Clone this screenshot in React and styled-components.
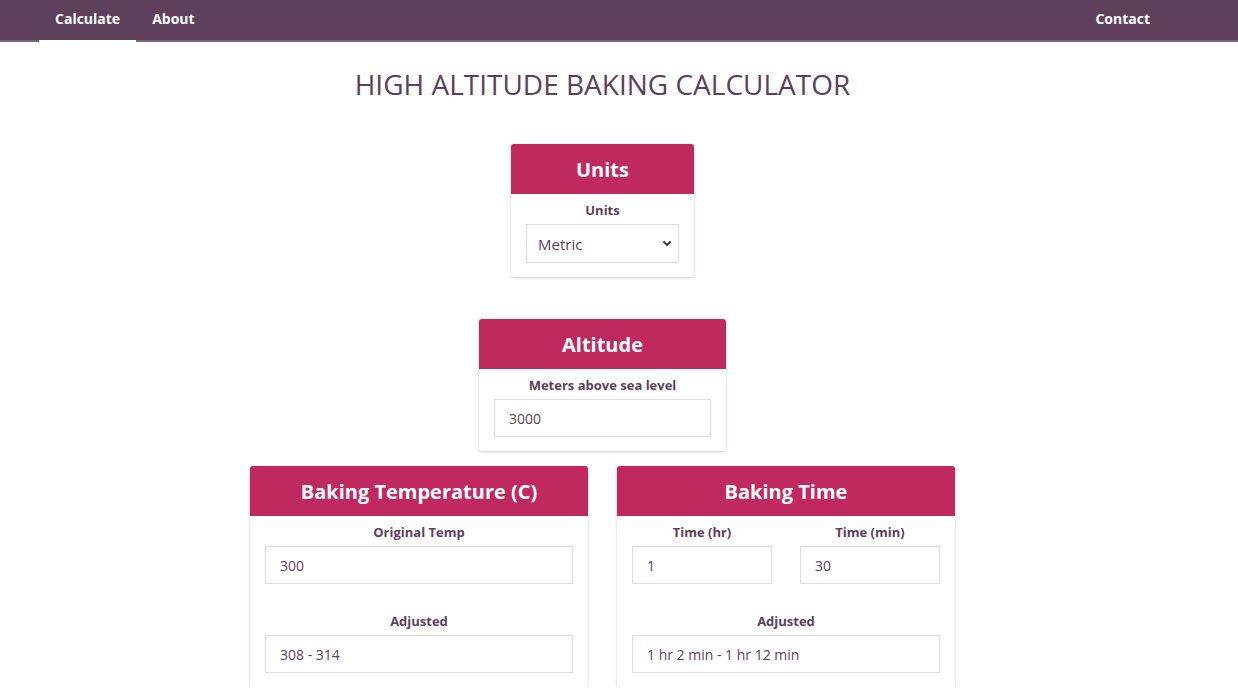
import React, { useState } from "react";
import styled, { createGlobalStyle } from "styled-components";

const GlobalStyle = createGlobalStyle`
  body {
    margin: 0;
    font-family: "Open Sans", "Noto Sans", sans-serif;
    background: #fff;
    color: #5d3f5c;
  }
  * { box-sizing: border-box; }
`;

const Nav = styled.nav`
  height: 42px;
  background-color: #5e405c;
  border-bottom: 2px solid #7b6378;
  display: flex;
  align-items: stretch;
  justify-content: space-between;
  padding: 0 72px 0 39px;
`;

const NavGroup = styled.div`
  display: flex;
  align-items: stretch;
`;

const NavItem = styled.a`
  display: flex;
  align-items: center;
  padding: 0 16px 4px;
  color: #fff;
  font-weight: 700;
  font-size: 14px;
  text-decoration: none;
  cursor: pointer;
  border-bottom: 2px solid ${(p) => (p.$active ? "#fff" : "transparent")};
  margin-bottom: -2px;
`;

const Main = styled.main`
  width: 1205px;
  display: flex;
  flex-direction: column;
  align-items: center;
`;

const Title = styled.h1`
  margin: 23px 0 0;
  font-size: 28px;
  font-weight: 400;
  line-height: 38px;
  color: #5d3f5c;
`;

const Card = styled.section`
  width: ${(p) => p.$width}px;
  margin-top: ${(p) => p.$top || 0}px;
  background: #fff;
  border-radius: 3px;
  box-shadow: 0 1px 3px rgba(0, 0, 0, 0.2);
  overflow: hidden;
`;

const CardHeader = styled.h2`
  margin: 0;
  height: 50px;
  background-color: #c0295f;
  color: #fff;
  font-size: 20px;
  font-weight: 700;
  display: flex;
  align-items: center;
  justify-content: center;
`;

const CardBody = styled.div`
  padding: 8px 15px 14px;
  display: flex;
  flex-direction: column;
`;

const Row = styled.div`
  display: flex;
  gap: 28px;
  justify-content: center;
`;

const CardRow = styled.div`
  display: flex;
  gap: 29px;
  margin-top: 15px;
`;

const Field = styled.label`
  display: flex;
  flex-direction: column;
  align-items: stretch;
  flex: 1;
  margin-top: ${(p) => p.$top || 0}px;
`;

const Label = styled.span`
  text-align: center;
  font-size: 13px;
  font-weight: 700;
  color: #5d3f5c;
  line-height: 16px;
  margin-bottom: 6px;
`;

const Input = styled.input`
  height: 38px;
  border: 1px solid #dcdcdc;
  padding: 0 14px;
  font-family: inherit;
  font-size: 14px;
  color: #5d3f5c;
  background: #fff;
  outline: none;
  width: 100%;
`;

const SelectWrap = styled.div`
  position: relative;
`;

const Select = styled.select`
  appearance: none;
  height: 39px;
  width: 100%;
  border: 1px solid #dcdcdc;
  padding: 0 11px;
  font-family: inherit;
  font-size: 15px;
  color: #5d3f5c;
  background: #fff;
  outline: none;
`;

const Chevron = styled.svg`
  position: absolute;
  right: 7px;
  top: 16px;
  pointer-events: none;
`;

export default function App() {
  const [units, setUnits] = useState("metric");
  return (
    <>
      <GlobalStyle />
      <Nav>
        <NavGroup>
          <NavItem $active>Calculate</NavItem>
          <NavItem>About</NavItem>
        </NavGroup>
        <NavGroup>
          <NavItem>Contact</NavItem>
        </NavGroup>
      </Nav>
      <Main>
        <Title>HIGH ALTITUDE BAKING CALCULATOR</Title>
        <Card $width={183} $top={41}>
          <CardHeader>Units</CardHeader>
          <CardBody>
            <Field>
              <Label>Units</Label>
              <SelectWrap>
                <Select value={units} onChange={(e) => setUnits(e.target.value)}>
                  <option value="metric">Metric</option>
                  <option value="imperial">Imperial</option>
                </Select>
                <Chevron width="10" height="7" viewBox="0 0 10 7">
                  <path d="M1.5 1.5 L5 5 L8.5 1.5" fill="none" stroke="#333" strokeWidth="1.8" />
                </Chevron>
              </SelectWrap>
            </Field>
          </CardBody>
        </Card>
        <Card $width={247} $top={42}>
          <CardHeader>Altitude</CardHeader>
          <CardBody>
            <Field>
              <Label>Meters above sea level</Label>
              <Input defaultValue="3000" />
            </Field>
          </CardBody>
        </Card>
        <CardRow>
          <Card $width={338}>
            <CardHeader>Baking Temperature (C)</CardHeader>
            <CardBody>
              <Field>
                <Label>Original Temp</Label>
                <Input defaultValue="300" />
              </Field>
              <Field $top={29}>
                <Label>Adjusted</Label>
                <Input defaultValue="308 - 314" readOnly />
              </Field>
            </CardBody>
          </Card>
          <Card $width={338}>
            <CardHeader>Baking Time</CardHeader>
            <CardBody>
              <Row>
                <Field>
                  <Label>Time (hr)</Label>
                  <Input defaultValue="1" />
                </Field>
                <Field>
                  <Label>Time (min)</Label>
                  <Input defaultValue="30" />
                </Field>
              </Row>
              <Field $top={29}>
                <Label>Adjusted</Label>
                <Input defaultValue="1 hr 2 min - 1 hr 12 min" readOnly />
              </Field>
            </CardBody>
          </Card>
        </CardRow>
      </Main>
    </>
  );
}
